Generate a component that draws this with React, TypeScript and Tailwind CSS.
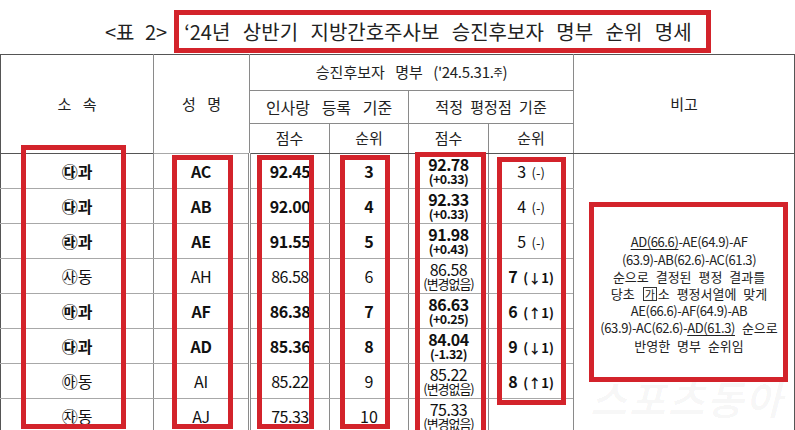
import React from "react";

type Row = {
  dept: string;
  bold: boolean;
  name: string;
  s1: string;
  r1: string;
  s2: string;
  d2: string;
  s2bold: boolean;
  r2: string;
  r2d: string;
  r2bold: boolean;
};

const rows: Row[] = [
  { dept: "㉰과", bold: true, name: "AC", s1: "92.45", r1: "3", s2: "92.78", d2: "(+0.33)", s2bold: true, r2: "3", r2d: "(-)", r2bold: false },
  { dept: "㉰과", bold: true, name: "AB", s1: "92.00", r1: "4", s2: "92.33", d2: "(+0.33)", s2bold: true, r2: "4", r2d: "(-)", r2bold: false },
  { dept: "㉱과", bold: true, name: "AE", s1: "91.55", r1: "5", s2: "91.98", d2: "(+0.43)", s2bold: true, r2: "5", r2d: "(-)", r2bold: false },
  { dept: "㉴동", bold: false, name: "AH", s1: "86.58", r1: "6", s2: "86.58", d2: "(변경없음)", s2bold: false, r2: "7", r2d: "(↓1)", r2bold: true },
  { dept: "㉲과", bold: true, name: "AF", s1: "86.38", r1: "7", s2: "86.63", d2: "(+0.25)", s2bold: true, r2: "6", r2d: "(↑1)", r2bold: true },
  { dept: "㉰과", bold: true, name: "AD", s1: "85.36", r1: "8", s2: "84.04", d2: "(-1.32)", s2bold: true, r2: "9", r2d: "(↓1)", r2bold: true },
  { dept: "㉵동", bold: false, name: "AI", s1: "85.22", r1: "9", s2: "85.22", d2: "(변경없음)", s2bold: false, r2: "8", r2d: "(↑1)", r2bold: true },
  { dept: "㉶동", bold: false, name: "AJ", s1: "75.33", r1: "10", s2: "75.33", d2: "(변경없음)", s2bold: false, r2: "", r2d: "", r2bold: false },
];

const th = "border border-[#8a8a8a] text-center align-middle font-normal text-[#222] whitespace-nowrap";
const bodyBase = "border-y border-y-[#a8a8a8] text-center align-middle text-[#111] p-0";
const vL = " border-l border-l-[#8a8a8a]";
const vR = " border-r border-r-[#8a8a8a]";
const line = "h-[17.2px] flex items-center justify-center";
const lat = "tracking-[-0.03em]";

export default function App() {
  return (
    <div className="relative w-[795px] h-[430px] overflow-hidden bg-white font-['Noto_Sans_CJK_KR','Noto_Sans',sans-serif] text-[#111]">
      {/* title */}
      <div className="h-[54px] pt-[10px] flex items-start pl-[105px]">
        <div className="h-[43px] flex items-center text-[20px] text-[#222] [word-spacing:6px] pr-[7px]">
          &lt;표 2&gt;
        </div>
        <div className="h-[43px] border-[5px] border-[#d3232b] flex items-center pl-[5px] pr-[14px] text-[20px] text-[#222] [word-spacing:8px] whitespace-nowrap">
          ‘24년 상반기 지방간호주사보 승진후보자 명부 순위 명세
        </div>
      </div>

      {/* table */}
      <table className="border-collapse table-fixed w-[794px] border-t border-t-[#555]">
        <colgroup>
          <col className="w-[153px]" />
          <col className="w-[96px]" />
          <col className="w-[80px]" />
          <col className="w-[79px]" />
          <col className="w-[80px]" />
          <col className="w-[85px]" />
          <col className="w-[221px]" />
        </colgroup>
        <thead>
          <tr className="h-[36px]">
            <th rowSpan={3} className={th + " text-[15px] [word-spacing:8px] border-t-[#555] border-b-[#555] border-l-[#555]"}>
              소 속
            </th>
            <th rowSpan={3} className={th + " text-[15px] [word-spacing:8px] border-t-[#555] border-b-[#555]"}>
              성 명
            </th>
            <th colSpan={4} className={th + " text-[15px] [word-spacing:7px] border-t-[#555]"}>
              승진후보자 명부{" "}
              <span className="[word-spacing:0px] tracking-[-0.02em]">
                (&apos;24.5.31.<sup className="text-[10px] relative -top-[2px]">주</sup>)
              </span>
            </th>
            <th rowSpan={3} className={th + " text-[15px] border-t-[#555] border-b-[#555] border-r-[#555]"}>
              비고
            </th>
          </tr>
          <tr className="h-[33px]">
            <th colSpan={2} className={th + " text-[16px] [word-spacing:8px]"}>
              인사랑 등록 기준
            </th>
            <th colSpan={2} className={th + " text-[15px] [word-spacing:4px]"}>
              적정 평정점 기준
            </th>
          </tr>
          <tr className="h-[30px]">
            <th className={th + " text-[15px] border-b-[#555]"}>점수</th>
            <th className={th + " text-[15px] border-b-[#555]"}>순위</th>
            <th className={th + " text-[15px] border-b-[#555]"}>점수</th>
            <th className={th + " text-[15px] border-b-[#555]"}>순위</th>
          </tr>
        </thead>
        <tbody>
          {rows.map((r, i) => {
            const w = r.bold ? " font-bold" : " font-normal";
            return (
              <tr key={i} className="h-[35px]">
                <td className={bodyBase + " border-l border-l-[#555] text-[16px]" + w}>{r.dept}</td>
                <td className={bodyBase + vL + " border-r-[3px] border-r-[#8a8a8a] border-double text-[16px] tracking-[-0.02em]" + w}>
                  {r.name}
                </td>
                <td className={bodyBase + vL + vR + " text-[16px] tracking-[-0.03em]" + w}>{r.s1}</td>
                <td className={bodyBase + vL + vR + " text-[16px]" + w}>{r.r1}</td>
                <td className={bodyBase + vL + vR}>
                  <div className={"flex flex-col items-center tracking-[-0.03em] " + (r.s2bold ? "font-bold" : "font-normal")}>
                    <span className="text-[16px] leading-[16px]">{r.s2}</span>
                    <span className={"leading-[14px] " + (r.s2bold ? "text-[12.5px]" : "text-[13px] tracking-[-0.08em]")}>{r.d2}</span>
                  </div>
                </td>
                <td className={bodyBase + vL + vR + (r.r2bold ? " font-bold" : " font-normal")}>
                  {r.r2 && (
                    <span className="whitespace-nowrap [word-spacing:2px]">
                      <span className="text-[16px]">{r.r2}</span>{" "}
                      <span className="text-[13px]">{r.r2d}</span>
                    </span>
                  )}
                </td>
                {i === 0 && (
                  <td
                    rowSpan={8}
                    className="border-y border-y-[#a8a8a8] border-l border-l-[#8a8a8a] border-r border-r-[#555] text-center align-middle p-0 text-[13px] leading-[17px] text-[#222] font-normal"
                  >
                    <div className="flex flex-col items-center pl-[10px] [word-spacing:4px] whitespace-nowrap">
                      <div className={line + " " + lat}>
                        <span className="underline underline-offset-2">AD(66.6)</span>-AE(64.9)-AF
                      </div>
                      <div className={line + " " + lat}>(63.9)-AB(62.6)-AC(61.3)</div>
                      <div className={line}>순으로 결정된 평정 결과를</div>
                      <div className={line}>
                        당초&nbsp;
                        <span className="inline-block border border-[#333] text-[11px] leading-[12px] px-[1px] mx-[1px]">가</span>소&nbsp;평정서열에&nbsp;맞게
                      </div>
                      <div className={line + " " + lat}>AE(66.6)-AF(64.9)-AB</div>
                      <div className={line}>
                        <span className={lat}>
                          (63.9)-AC(62.6)-<span className="underline underline-offset-2">AD(61.3)</span>
                        </span>
                        &nbsp;순으로
                      </div>
                      <div className={line}>반영한 명부 순위임</div>
                    </div>
                  </td>
                )}
              </tr>
            );
          })}
        </tbody>
      </table>

      {/* red annotation boxes */}
      <div className="absolute left-[21px] top-[145px] w-[105px] h-[284px] border-[5px] border-[#d3232b]" />
      <div className="absolute left-[172px] top-[155px] w-[61px] h-[274px] border-[5px] border-[#d3232b]" />
      <div className="absolute left-[257px] top-[155px] w-[57px] h-[274px] border-[5px] border-[#d3232b]" />
      <div className="absolute left-[340px] top-[155px] w-[50px] h-[274px] border-[5px] border-[#d3232b]" />
      <div className="absolute left-[415px] top-[152px] w-[71px] h-[290px] border-[5px] border-[#d3232b]" />
      <div className="absolute left-[497px] top-[157px] w-[69px] h-[248px] border-[5px] border-[#d3232b]" />
      <div className="absolute left-[589px] top-[202px] w-[199px] h-[180px] border-[5px] border-[#d3232b]" />

      {/* watermark */}
      <div className="absolute left-[590px] top-[368px] text-[40px] font-bold italic text-black/[0.03] tracking-[2px] pointer-events-none">
        스포츠동아
      </div>
    </div>
  );
}
